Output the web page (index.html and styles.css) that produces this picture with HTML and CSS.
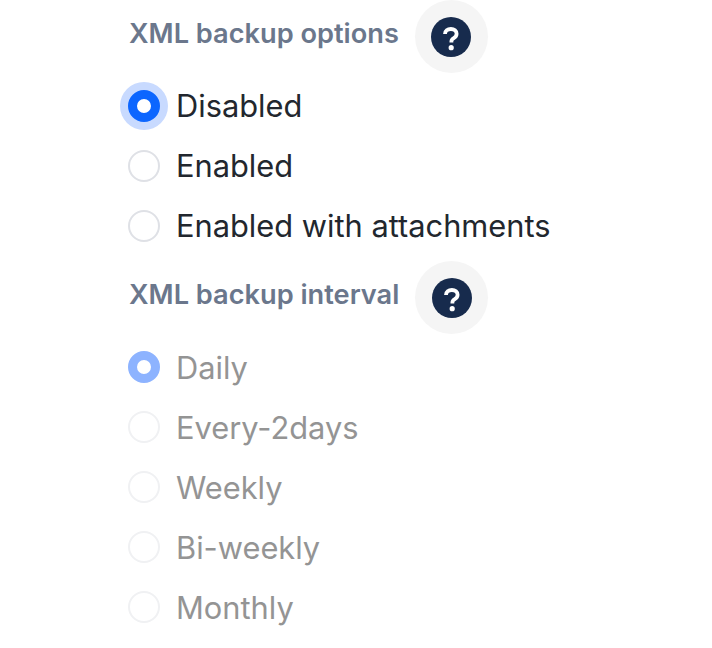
FILE: index.html

```html
<!DOCTYPE html>
<html lang="en">

<head>
    <meta charset="UTF-8">
    <meta name="viewport" content="width=device-width, initial-scale=1.0">
    <title>XML backup</title>
    <link rel="stylesheet" href="styles.css">
</head>

<body>
    <div class="group">
        <div class="heading">
            <span class="heading-text">XML backup options</span>
            <button class="help" type="button" aria-label="Help">
                <svg class="help-icon" viewBox="0 0 40 40"><circle cx="20" cy="20" r="20" fill="#172b4d"/><path d="M14 17c0-3.2 2.6-5 5.9-5s5.7 1.9 5.7 4.8c0 2.1-1 3.3-2.8 4.4-1.7 1-2.4 1.7-2.4 3.2v1" fill="none" stroke="#fff" stroke-width="3.8"/><circle cx="20.2" cy="30.7" r="2.6" fill="#fff"/></svg>
            </button>
        </div>
        <div class="option"><span class="radio radio-on radio-focus"></span><span class="label">Disabled</span></div>
        <div class="option"><span class="radio"></span><span class="label">Enabled</span></div>
        <div class="option"><span class="radio"></span><span class="label">Enabled with attachments</span></div>
    </div>
    <div class="group group-off">
        <div class="heading">
            <span class="heading-text">XML backup interval</span>
            <button class="help" type="button" aria-label="Help">
                <svg class="help-icon" viewBox="0 0 40 40"><circle cx="20" cy="20" r="20" fill="#172b4d"/><path d="M14 17c0-3.2 2.6-5 5.9-5s5.7 1.9 5.7 4.8c0 2.1-1 3.3-2.8 4.4-1.7 1-2.4 1.7-2.4 3.2v1" fill="none" stroke="#fff" stroke-width="3.8"/><circle cx="20.2" cy="30.7" r="2.6" fill="#fff"/></svg>
            </button>
        </div>
        <div class="option"><span class="radio radio-on"></span><span class="label">Daily</span></div>
        <div class="option"><span class="radio"></span><span class="label">Every-2days</span></div>
        <div class="option"><span class="radio"></span><span class="label">Weekly</span></div>
        <div class="option"><span class="radio"></span><span class="label">Bi-weekly</span></div>
        <div class="option"><span class="radio"></span><span class="label">Monthly</span></div>
    </div>
</body>

</html>
```

FILE: styles.css

```css
body {
    font-family: Inter, "Liberation Sans", sans-serif;
    background-color: #fff;
    margin: 0;
    padding: 0 0 0 128px;
}

.group {
    margin-bottom: 5px;
}

.heading {
    display: flex;
    align-items: center;
    gap: 16px;
    height: 73px;
    margin-bottom: 3px;
}

.heading-text {
    font-size: 27.2px;
    font-weight: 600;
    color: #6b778c;
    margin-bottom: 6px;
    padding-left: 1px;
}

.help {
    width: 73px;
    height: 73px;
    padding: 0;
    border: none;
    border-radius: 50%;
    background-color: #f5f5f5;
    display: flex;
    justify-content: center;
    align-items: center;
}

.help-icon {
    width: 40px;
    height: 40px;
}

.option {
    display: flex;
    align-items: center;
    gap: 16px;
    height: 60px;
}

.radio {
    box-sizing: border-box;
    width: 32px;
    height: 32px;
    border: 2px solid #dfe1e6;
    border-radius: 50%;
    background-color: #fff;
}

.radio-on {
    border: 9px solid #0c66ff;
}

.radio-focus {
    box-shadow: 0 0 0 8px #c8daff;
}

.label {
    font-size: 30.8px;
    color: #22272e;
    margin-bottom: 1px;
}

.group-off .radio {
    border-color: #f0f1f3;
}

.group-off .radio-on {
    border-color: #8db3ff;
}

.group-off .label {
    color: #949494;
    margin-bottom: 0;
    margin-top: 1px;
}
```
